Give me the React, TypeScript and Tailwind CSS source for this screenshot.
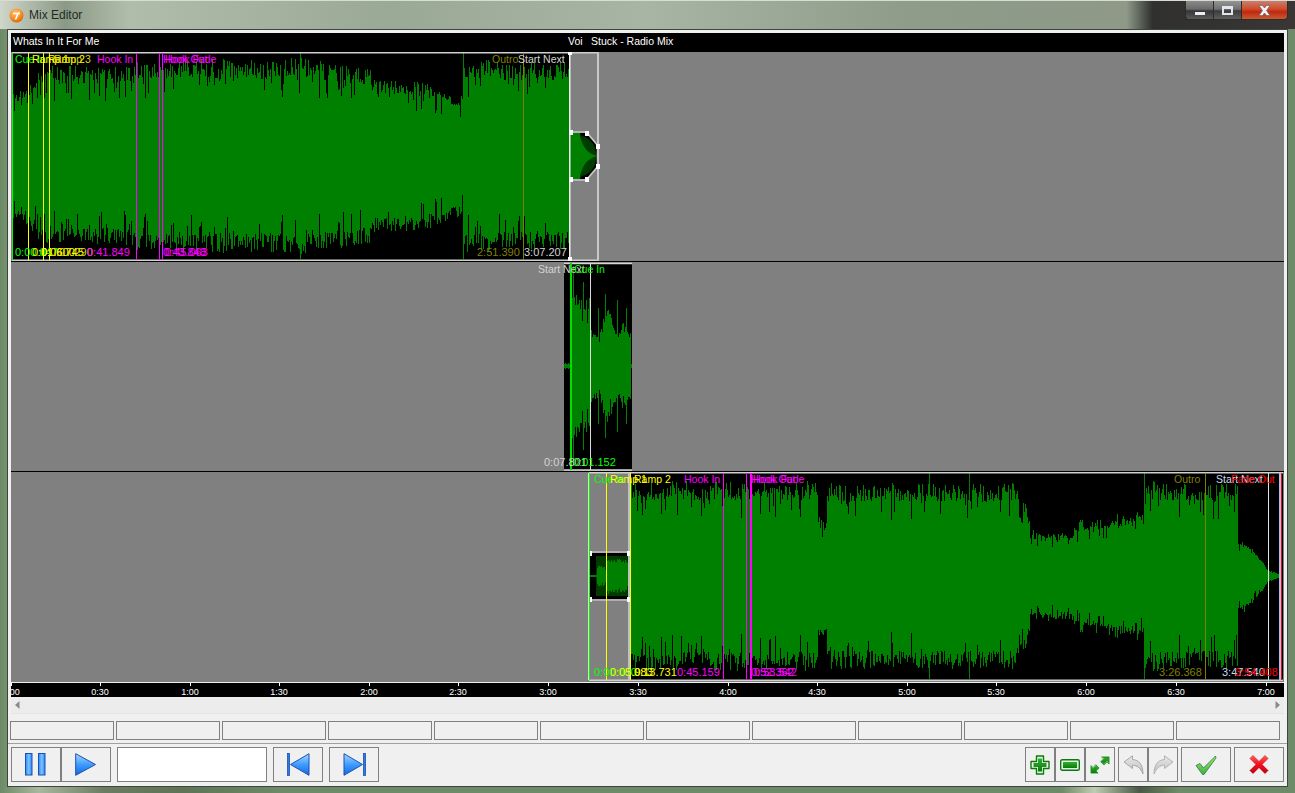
import React from "react";

type Env = [number, number][];

function rng(seed: number) {
  let s = seed >>> 0;
  return () => {
    s = (s + 0x6d2b79f5) >>> 0;
    let t = s;
    t = Math.imul(t ^ (t >>> 15), t | 1);
    t ^= t + Math.imul(t ^ (t >>> 7), t | 61);
    return ((t ^ (t >>> 14)) >>> 0) / 4294967296;
  };
}

function interp(env: Env, x: number) {
  for (let i = 0; i < env.length - 1; i++) {
    const [a, av] = env[i];
    const [b, bv] = env[i + 1];
    if (x >= a && x <= b) return b === a ? bv : av + ((bv - av) * (x - a)) / (b - a);
  }
  return env[env.length - 1][1];
}

function column(r: () => number) {
  const roll = r();
  if (roll < 0.13) return 0.6 + 0.18 * r();
  return 0.8 + 0.2 * Math.pow(r(), 1.3);
}

function wavePath(x0: number, x1: number, cy: number, env: Env, seed: number, spikes: Record<number, number> = {}) {
  const r = rng(seed);
  let d = "";
  for (let x = x0; x < x1; x++) {
    const a = interp(env, x);
    const f = column(r);
    const g = r() < 0.45 ? column(r) : f;
    let top = a * f;
    let bot = a * g;
    if (spikes[x]) {
      top = spikes[x];
      bot = spikes[x];
    }
    d += `M${x + 0.5} ${(cy - top).toFixed(0)}V${(cy + bot).toFixed(0)}`;
  }
  return d;
}

const t1Env: Env = [
  [12, 64], [30, 76], [45, 90], [135, 90], [137, 96], [160, 98], [262, 96], [300, 99], [340, 92],
  [371, 88], [373, 76], [400, 78], [430, 72], [462, 60], [463, 98], [520, 94], [569, 94],
];
const t2Env: Env = [
  [564, 3], [569, 3], [570, 74], [590, 68], [591, 36], [598, 32], [601, 42], [606, 60], [612, 50],
  [618, 30], [622, 46], [627, 36], [630, 34], [631, 3], [632, 2],
];
const t3Env: Env = [
  [631, 95], [817, 95], [818, 60], [826, 60], [827, 93], [1017, 93], [1028, 66], [1030, 46], [1072, 44],
  [1074, 56], [1120, 62], [1143, 68], [1144, 96], [1237, 92], [1238, 40], [1250, 32], [1263, 14], [1268, 6],
  [1281, 1],
];
const innerEnv: Env = [
  [590, 1], [596, 1], [597, 11], [606, 10], [607, 18], [630, 16],
];

const wave1 = wavePath(12, 570, 104, t1Env, 11, { 300: 103, 463: 103 });
const wave2 = wavePath(564, 632, 104, t2Env, 23, { 571: 103, 573: 100, 583: 84, 598: 58, 605: 72, 617: 66, 626: 58 });
const wave3 = wavePath(631, 1282, 104, t3Env, 37, { 929: 103, 969: 103, 1144: 103 });
const inner3 = wavePath(590, 630, 104, innerEnv, 41);

type Lbl = { x: number; c: string; t: string };

const Labels = ({ top, bottom }: { top: Lbl[]; bottom: Lbl[] }) => (
  <>
    {top.map((l, i) => (
      <span key={"t" + i} className="absolute top-[1px] text-[10.5px] leading-[13px] whitespace-nowrap" style={{ left: l.x - 11, color: l.c }}>
        {l.t}
      </span>
    ))}
    {bottom.map((l, i) => (
      <span key={"b" + i} className="absolute top-[194px] text-[11px] leading-[13px] whitespace-nowrap" style={{ left: l.x - 11, color: l.c }}>
        {l.t}
      </span>
    ))}
  </>
);

const G = "#00ff00";
const Y = "#ffff00";
const Y2 = "#d8d800";
const M = "#ff00ff";
const O = "#808000";
const W = "#d4d4d4";
const R = "#ff0000";

const Line = ({ x, c, y1 = 1, y2 = 208, w = 1 }: { x: number; c: string; y1?: number; y2?: number; w?: number }) => (
  <line x1={x - 11 + 0.5} x2={x - 11 + 0.5} y1={y1} y2={y2} stroke={c} strokeWidth={w} shapeRendering="crispEdges" />
);

const Handle = ({ x, y }: { x: number; y: number }) => <rect x={x - 2} y={y - 2} width={4} height={5} fill="#ffffff" />;

const Track1 = () => (
  <div className="relative h-[210px] bg-[#808080] border-b border-black overflow-hidden">
    <svg className="absolute inset-0" width="1273" height="209" viewBox="11 0 1273 209">
      <rect x={12} y={1} width={558} height={207} fill="#000" />
      <path d={wave1} stroke="#008000" strokeWidth={1} shapeRendering="crispEdges" fill="none" />
      <path d="M12 .7H598M12 208.3H598" stroke="#d0d0d0" strokeWidth={1.5} />
      <rect x={597} y={0} width={2} height={209} fill="#c8c8c8" />
      <path d="M570 81H586L597 94V114L586 127H570Z" fill="#000" />
      <path d="M570 81H580Q582 96 597 104Q582 112 580 127H570Z" fill="#008000" />
      <path d="M580 84Q588 84 594 93L597 104Q584 101 580 84ZM580 124Q588 124 594 115L597 104Q584 107 580 124Z" fill="#003c00" />
      <path d="M570.5 80H586.5L597.5 93V115L586.5 128H570.5" fill="none" stroke="#c8c8c8" strokeWidth={1.5} />
      <rect x={569} y={1} width={1.5} height={207} fill="#f0f0f0" />
      <Handle x={570} y={0} />
      <Handle x={570} y={207} />
      <Handle x={571} y={80} />
      <Handle x={587} y={81} />
      <Handle x={598} y={94} />
      <Handle x={598} y={114} />
      <Handle x={587} y={127} />
      <Handle x={571} y={127} />
    </svg>
    <svg className="absolute inset-0" width="1273" height="209">
      <Line x={12} c={G} />
      <Line x={28} c={Y} />
      <Line x={43} c={Y} />
      <Line x={49} c={Y} />
      <Line x={136} c={M} />
      <Line x={159} c={M} />
      <Line x={162} c={M} />
      <Line x={523} c={O} />
    </svg>
    <Labels
      top={[
        { x: 15, c: G, t: "Cue In" },
        { x: 32, c: Y, t: "Ramp 1" },
        { x: 48, c: Y, t: "Ramp 2" },
        { x: 54, c: Y2, t: "Ramp 3" },
        { x: 97, c: M, t: "Hook In" },
        { x: 163, c: M, t: "Hook Out" },
        { x: 165, c: M, t: "Hook Fade" },
        { x: 492, c: O, t: "Outro" },
        { x: 518, c: W, t: "Start Next" },
      ]}
      bottom={[
        { x: 15, c: G, t: "0:00.047" },
        { x: 32, c: Y, t: "0:01.600" },
        { x: 41, c: Y, t: "0:06.745" },
        { x: 50, c: Y2, t: "0:07.290" },
        { x: 87, c: M, t: "0:41.849" },
        { x: 163, c: M, t: "0:43.848" },
        { x: 165, c: M, t: "0:45.063" },
        { x: 477, c: O, t: "2:51.390" },
        { x: 524, c: W, t: "3:07.207" },
      ]}
    />
  </div>
);

const Track2 = () => (
  <div className="relative h-[210px] bg-[#808080] border-b border-black overflow-hidden">
    <svg className="absolute inset-0" width="1273" height="209" viewBox="11 0 1273 209">
      <rect x={564} y={1} width={68} height={207} fill="#000" />
      <path d={wave2} stroke="#008000" strokeWidth={1} shapeRendering="crispEdges" fill="none" />
      <path d="M564 1.5H632M564 208H632" stroke="#d6d6d6" strokeWidth={1.5} />
      <rect x={570} y={1} width={2} height={207} fill="#00e000" />
      <rect x={590} y={1} width={1} height={207} fill="#dcdcdc" />
    </svg>
    <Labels
      top={[
        { x: 538, c: W, t: "Start Next" },
        { x: 574, c: G, t: "Cue In" },
      ]}
      bottom={[
        { x: 544, c: W, t: "0:07.801" },
        { x: 573, c: G, t: "0:01.152" },
      ]}
    />
  </div>
);

const Track3 = () => (
  <div className="relative h-[210px] bg-[#808080] overflow-hidden">
    <svg className="absolute inset-0" width="1273" height="210" viewBox="11 0 1273 210">
      <rect x={631} y={1} width={652} height={207} fill="#000" />
      <path d={wave3} stroke="#008000" strokeWidth={1} shapeRendering="crispEdges" fill="none" />
      <path d="M589 .7H1283M589 208.3H1283" stroke="#d0d0d0" strokeWidth={1.5} />
      <rect x={590} y={81} width={40} height={46} fill="#000" />
      <path d="M596 84H630V124H596Z" fill="#003c00" />
      <path d={inner3} stroke="#008000" strokeWidth={1} shapeRendering="crispEdges" fill="none" />
      <path d="M590 80H630M590 128H630" stroke="#c0c0c0" strokeWidth={1.5} />
      <rect x={628} y={1} width={2} height={207} fill="#c0c0c0" />
      <Handle x={590} y={81} />
      <Handle x={590} y={127} />
      <Handle x={629} y={81} />
      <Handle x={629} y={127} />
    </svg>
    <svg className="absolute inset-0" width="1273" height="210">
      <Line x={588} c="#d6f0d6" />
      <Line x={589} c={G} />
      <Line x={606} c={Y} />
      <Line x={630} c={Y} />
      <Line x={723} c={M} />
      <Line x={746} c={M} />
      <Line x={750} c={M} w={2} />
      <Line x={1205} c={O} />
      <Line x={1268} c="#d8e8d8" />
      <Line x={1279} c="#a0c4f0" w={2} />
      <Line x={1281} c={R} />
    </svg>
    <Labels
      top={[
        { x: 594, c: G, t: "Cue In" },
        { x: 610, c: Y, t: "Ramp 1" },
        { x: 634, c: Y, t: "Ramp 2" },
        { x: 684, c: M, t: "Hook In" },
        { x: 751, c: M, t: "Hook Out" },
        { x: 753, c: M, t: "Hook Fade" },
        { x: 1174, c: O, t: "Outro" },
        { x: 1216, c: "#c8dcf0", t: "Start Next" },
        { x: 1231, c: R, t: "Fade Out" },
      ]}
      bottom={[
        { x: 594, c: G, t: "0:00.000" },
        { x: 610, c: Y, t: "0:05.983" },
        { x: 634, c: Y, t: "0:13.731" },
        { x: 677, c: M, t: "0:45.159" },
        { x: 751, c: M, t: "0:52.362" },
        { x: 754, c: M, t: "0:53.542" },
        { x: 1159, c: O, t: "3:26.368" },
        { x: 1222, c: "#c8dcf0", t: "3:47.540" },
        { x: 1235, c: R, t: "3:54.408" },
      ]}
    />
  </div>
);

const ticks = [
  ["0:00", 11], ["0:30", 100], ["1:00", 190], ["1:30", 279], ["2:00", 369], ["2:30", 458], ["3:00", 548],
  ["3:30", 638], ["4:00", 728], ["4:30", 817], ["5:00", 907], ["5:30", 996], ["6:00", 1086], ["6:30", 1176], ["7:00", 1266],
] as [string, number][];

const Ruler = () => (
  <div className="relative h-[15px] bg-black border-t border-[#f0f0f0] overflow-hidden">
    {ticks.map(([t, x]) => (
      <React.Fragment key={t}>
        <div className="absolute top-0 w-px h-[3px] bg-white" style={{ left: x - 11 }} />
        <span className="absolute top-[4px] w-[30px] -ml-[15px] text-center text-[9px] leading-[11px] text-white" style={{ left: x - 11 }}>
          {t}
        </span>
      </React.Fragment>
    ))}
  </div>
);

const Scroll = () => (
  <div className="h-[17px] flex items-center justify-between px-[4px] bg-[#ececec] border-b border-[#e4e4e4]">
    <svg width="5" height="8" viewBox="0 0 5 8"><path d="M4.5 0V8L0 4Z" fill="#8a8a8a" /></svg>
    <svg width="5" height="8" viewBox="0 0 5 8"><path d="M.5 0V8L5 4Z" fill="#8a8a8a" /></svg>
  </div>
);

const Btn = ({ w, children, className = "" }: { w: string; children?: React.ReactNode; className?: string }) => (
  <div className={`${w} h-[35px] shrink-0 flex items-center justify-center border border-[#808080] bg-[#f0f0f0] ${className}`}>{children}</div>
);

const Defs = () => (
  <svg width="0" height="0" className="absolute">
    <defs>
      <linearGradient id="blueG" x1="0" y1="0" x2="0" y2="1">
        <stop offset="0" stopColor="#a8d8ff" />
        <stop offset="0.5" stopColor="#3f9cff" />
        <stop offset="1" stopColor="#1468e0" />
      </linearGradient>
      <linearGradient id="blueH" x1="0" y1="0" x2="1" y2="0">
        <stop offset="0" stopColor="#2a86f5" />
        <stop offset="0.5" stopColor="#7cc4ff" />
        <stop offset="1" stopColor="#2a86f5" />
      </linearGradient>
      <linearGradient id="greenG" x1="0" y1="0" x2="0" y2="1">
        <stop offset="0" stopColor="#30b030" />
        <stop offset="1" stopColor="#0a7a0a" />
      </linearGradient>
      <linearGradient id="greyG" x1="0" y1="0" x2="0" y2="1">
        <stop offset="0" stopColor="#e8e8e8" />
        <stop offset="1" stopColor="#bdbdbd" />
      </linearGradient>
      <linearGradient id="checkG" x1="0" y1="0" x2="0" y2="1">
        <stop offset="0" stopColor="#a8e860" />
        <stop offset="1" stopColor="#40b040" />
      </linearGradient>
      <linearGradient id="redG" x1="0" y1="0" x2="0" y2="1">
        <stop offset="0" stopColor="#ff6060" />
        <stop offset="0.5" stopColor="#f01020" />
        <stop offset="1" stopColor="#c00010" />
      </linearGradient>
    </defs>
  </svg>
);

const BL = "#1a50b0";

const PauseIcon = () => (
  <svg width="22" height="23" viewBox="0 0 22 23">
    <rect x=".5" y=".5" width="6.5" height="21.5" fill="url(#blueH)" stroke={BL} />
    <rect x="13.5" y=".5" width="6.5" height="21.5" fill="url(#blueH)" stroke={BL} />
  </svg>
);
const PlayIcon = () => (
  <svg width="22" height="23" viewBox="0 0 22 23">
    <path d="M.7.7 20.5 11.5.7 22.3Z" fill="url(#blueG)" stroke={BL} />
  </svg>
);
const PrevIcon = () => (
  <svg width="23" height="23" viewBox="0 0 23 23">
    <rect x=".5" y=".5" width="2" height="22" fill="#2a7ae8" stroke={BL} strokeWidth=".8" />
    <path d="M22 .7V22.3L3.5 11.5Z" fill="url(#blueG)" stroke={BL} />
  </svg>
);
const NextIcon = () => (
  <svg width="23" height="23" viewBox="0 0 23 23">
    <path d="M1 .7V22.3L19.5 11.5Z" fill="url(#blueG)" stroke={BL} />
    <rect x="20.5" y=".5" width="2" height="22" fill="#2a7ae8" stroke={BL} strokeWidth=".8" />
  </svg>
);
const PlusIcon = () => (
  <svg width="20" height="20" viewBox="0 0 20 20">
    <path d="M6.5 1H13.5V6.5H19V13.5H13.5V19H6.5V13.5H1V6.5H6.5Z" fill="#e8f4e8" stroke="#0a7a0a" strokeWidth="1.4" strokeLinejoin="round" />
    <path d="M8 3.5H12V8H16.5V12H12V16.5H8V12H3.5V8H8Z" fill="url(#greenG)" />
  </svg>
);
const MinusIcon = () => (
  <svg width="20" height="12" viewBox="0 0 20 12">
    <rect x=".7" y=".7" width="18.6" height="10.6" rx="1.5" fill="#e8f4e8" stroke="#0a7a0a" strokeWidth="1.4" />
    <rect x="3" y="3" width="14" height="6" fill="url(#greenG)" />
  </svg>
);
const ExpandIcon = () => (
  <svg width="22" height="20" viewBox="0 0 22 20">
    <path d="M12 1.5H20.5V9.5L18 7 15 10 11 6.5 14.5 3.5Z" fill="url(#greenG)" stroke="#d8f0d8" strokeWidth="1.2" strokeLinejoin="round" />
    <path d="M1.5 10V18.5H10L7.5 16 10.5 13 7 9.5 4 12.5Z" fill="url(#greenG)" stroke="#d8f0d8" strokeWidth="1.2" strokeLinejoin="round" />
    <path d="M12.7 2H20V9L18 7 15 10 11.7 6.7 14.7 3.9Z" fill="none" stroke="#0a7a0a" strokeWidth=".7" />
    <path d="M2 10.7V18H9L7 16 10 13 6.7 9.7 3.9 12.7Z" fill="none" stroke="#0a7a0a" strokeWidth=".7" />
  </svg>
);
const UndoIcon = () => (
  <svg width="21" height="20" viewBox="0 0 21 20">
    <path d="M1 7 9.5.8V4.5C16 5 20 9.5 20 19 17.5 13 14.5 10.5 9.5 10.2V13.5Z" fill="url(#greyG)" stroke="#a8a8a8" strokeLinejoin="round" />
  </svg>
);
const RedoIcon = () => (
  <svg width="21" height="20" viewBox="0 0 21 20">
    <path d="M20 7 11.5.8V4.5C5 5 1 9.5 1 19 3.5 13 6.5 10.5 11.5 10.2V13.5Z" fill="url(#greyG)" stroke="#b4b4b4" strokeLinejoin="round" />
  </svg>
);
const CheckIcon = () => (
  <svg width="22" height="20" viewBox="0 0 22 20">
    <path d="M1 10.5 5 8.5 8.5 13 20.5 1 21 3 9 19.5 7.5 19.5Z" fill="url(#checkG)" stroke="#1f7a50" strokeWidth=".8" strokeLinejoin="round" />
  </svg>
);
const CrossIcon = () => (
  <svg width="22" height="21" viewBox="0 0 22 21">
    <path d="M1.5 4.5 5 1 11 7 17 1 20.5 4.5 14.5 10.5 20.5 16.5 17 20 11 14 5 20 1.5 16.5 7.5 10.5Z" fill="url(#redG)" stroke="#d8a0a0" strokeWidth=".8" strokeLinejoin="round" />
  </svg>
);

const WinBtn = ({ w, className, children }: { w: string; className: string; children: React.ReactNode }) => (
  <div className={`${w} h-full flex items-center justify-center ${className}`}>{children}</div>
);

export default function App() {
  return (
    <div className="relative w-[1295px] h-[793px] flex flex-col overflow-hidden bg-[linear-gradient(90deg,#6c8a66_0%,#a8b8a0_3%,#6a7d64_8%,#5e7358_14%,#6f8a68_22%,#6f8a68_82%,#c0ccb4_84.5%,#4a5a46_88%,#6f8a68_91%,#6f8a68_100%)] [font-family:'Liberation_Sans',Arial,sans-serif]">
      <Defs />
      <div className="relative h-[29px] shrink-0 flex items-start border-t border-[#d8ddd4] bg-[linear-gradient(90deg,#cfd6cb_0%,#8b9a86_5%,#b0bdaa_10%,#9aa896_30%,#a9b5a4_50%,#8f9c8a_70%,#8e9988_87%,#30302e_89%,#3a3636_100%)]">
        <div className="flex items-center h-[28px] pl-[9px] gap-[5px]">
          <svg width="15" height="15" viewBox="0 0 15 15">
            <defs>
              <radialGradient id="orb" cx="0.4" cy="0.3" r="0.8">
                <stop offset="0" stopColor="#ffc070" />
                <stop offset="0.6" stopColor="#f58a1f" />
                <stop offset="1" stopColor="#c85a08" />
              </radialGradient>
            </defs>
            <circle cx="7.5" cy="7.5" r="7" fill="url(#orb)" />
            <path d="M4 5.5H9L6.5 11.5M10 3.8V6.5" stroke="#fff" strokeWidth="1.5" fill="none" />
          </svg>
          <span className="text-[12px] text-[#1e2a1e]">Mix Editor</span>
        </div>
        <div className="ml-auto mr-[7px] flex h-[19px] w-[103px] rounded-b-[4px] border border-t-0 border-[#2c2c2c] overflow-hidden">
          <WinBtn w="w-[28px]" className="items-end pb-[4px] border-r border-[#2c2c2c] bg-[linear-gradient(180deg,#8a8a8a_0%,#6a6a6a_45%,#363636_55%,#5a5a5a_100%)]">
            <div className="w-[10px] h-[3px] bg-[#e8ecf4]" />
          </WinBtn>
          <WinBtn w="w-[28px]" className="border-r border-[#2c2c2c] bg-[linear-gradient(180deg,#949494_0%,#707070_45%,#3c3c3c_55%,#5e5e5e_100%)]">
            <div className="w-[11px] h-[9px] border-2 border-t-[3px] border-[#dfe4ee]" />
          </WinBtn>
          <WinBtn w="flex-1" className="bg-[linear-gradient(180deg,#c88070_0%,#d04a28_45%,#c02810_60%,#c85a30_100%)]">
            <svg width="13" height="11" viewBox="0 0 13 11">
              <path d="M1 .5H4.5L6.5 3 8.500 .5H12L8.500 5.500 12 10.500H8.500L6.500 8 4.500 10.500H1L4.500 5.500Z" fill="#f0f2f8" stroke="#5a5a60" strokeWidth=".6" />
            </svg>
          </WinBtn>
        </div>
      </div>
      <div className="flex-1 mx-[7px] mb-[6px] border border-[#3c463a] bg-[#f0f0f0] flex flex-col px-[3px] pt-[3px]">
        <div className="h-[19px] shrink-0 bg-black text-white text-[10.5px] leading-[17px] flex pl-[2px]">
          <span className="w-[555px]">Whats In It For Me</span>
          <span className="w-[23px]">Voi</span>
          <span>Stuck - Radio Mix</span>
        </div>
        <Track1 />
        <Track2 />
        <Track3 />
        <Ruler />
        <Scroll />
        <div className="flex gap-[2px] mt-[7px] -mx-[1px] shrink-0">
          {Array.from({ length: 12 }).map((_, i) => (
            <div key={i} className="w-[104px] h-[19px] shrink-0 border border-[#808080] bg-[#f0f0f0]" />
          ))}
        </div>
        <div className="h-px bg-[#a0a0a0] -mx-[3px] mt-[3px] shrink-0" />
        <div className="flex mt-[3px] shrink-0">
          <Btn w="w-[50px]"><PauseIcon /></Btn>
          <Btn w="w-[50px]"><PlayIcon /></Btn>
          <div className="w-[150px] h-[35px] ml-[6px] border border-[#808080] bg-white" />
          <Btn w="w-[50px]" className="ml-[6px]"><PrevIcon /></Btn>
          <Btn w="w-[50px]" className="ml-[6px]"><NextIcon /></Btn>
          <Btn w="w-[30px]" className="ml-auto"><PlusIcon /></Btn>
          <Btn w="w-[30px]"><MinusIcon /></Btn>
          <Btn w="w-[30px]"><ExpandIcon /></Btn>
          <Btn w="w-[30px]" className="ml-[3px]"><UndoIcon /></Btn>
          <Btn w="w-[30px]"><RedoIcon /></Btn>
          <Btn w="w-[50px]" className="ml-[3px]"><CheckIcon /></Btn>
          <Btn w="w-[50px]" className="ml-[3px]"><CrossIcon /></Btn>
        </div>
      </div>
    </div>
  );
}
